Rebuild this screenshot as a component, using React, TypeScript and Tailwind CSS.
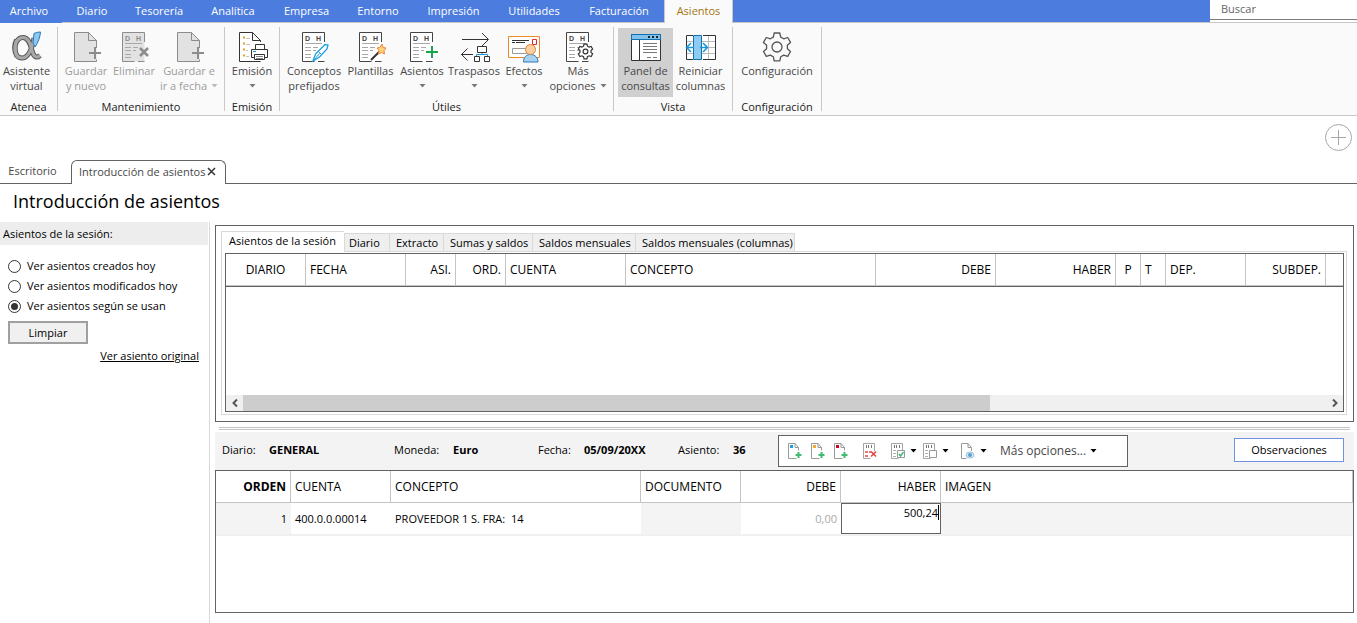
import type { ReactNode } from 'react';
import clsx from 'clsx';

const menuTabs = [
  { label: 'Archivo', width: 'w-[62px]' },
  { label: 'Diario', width: 'w-[60px]' },
  { label: 'Tesorería', width: 'w-[74px]' },
  { label: 'Analítica', width: 'w-[74px]' },
  { label: 'Empresa', width: 'w-[73px]' },
  { label: 'Entorno', width: 'w-[70px]' },
  { label: 'Impresión', width: 'w-[81px]' },
  { label: 'Utilidades', width: 'w-[80px]' },
  { label: 'Facturación', width: 'w-[90px]' },
];

const queryTabs = [
  { label: 'Diario', className: 'w-[46px] border-l pl-1' },
  { label: 'Extracto', className: 'w-[54px] pl-[6px]' },
  { label: 'Sumas y saldos', className: 'w-[89px] pl-[6px]' },
  { label: 'Saldos mensuales', className: 'w-[103px] pl-[6px]' },
  { label: 'Saldos mensuales (columnas)', className: 'w-[159px] pl-[6px]' },
];

const sessionColumns = [
  { label: 'DIARIO', className: 'w-[80px] text-center' },
  { label: 'FECHA', className: 'w-[100px] text-left' },
  { label: 'ASI.', className: 'w-[50px] text-right' },
  { label: 'ORD.', className: 'w-[50px] text-right' },
  { label: 'CUENTA', className: 'w-[120px] text-left' },
  { label: 'CONCEPTO', className: 'w-[250px] text-left' },
  { label: 'DEBE', className: 'w-[120px] text-right' },
  { label: 'HABER', className: 'w-[120px] text-right' },
  { label: 'P', className: 'w-[25px] text-center' },
  { label: 'T', className: 'w-[25px] text-left' },
  { label: 'DEP.', className: 'w-[80px] text-left' },
  { label: 'SUBDEP.', className: 'w-[80px] text-right' },
];

const entryColumns = [
  { label: 'ORDEN', className: 'w-[75px] text-right font-bold' },
  { label: 'CUENTA', className: 'w-[100px] text-left font-normal' },
  { label: 'CONCEPTO', className: 'w-[250px] text-left font-normal' },
  { label: 'DOCUMENTO', className: 'w-[100px] text-left font-normal' },
  { label: 'DEBE', className: 'w-[100px] text-right font-normal' },
  { label: 'HABER', className: 'w-[100px] text-right font-normal' },
  { label: 'IMAGEN', className: 'text-left font-normal' },
];

const entryInfo = [
  { label: 'Diario:', value: 'GENERAL', width: 'w-[172px]', labelWidth: 'w-[47px]' },
  { label: 'Moneda:', value: 'Euro', width: 'w-[144px]', labelWidth: 'w-[59px]' },
  { label: 'Fecha:', value: '05/09/20XX', width: 'w-[140px]', labelWidth: 'w-[46px]' },
  { label: 'Asiento:', value: '36', width: 'w-[100px]', labelWidth: 'w-[55px]' },
];

const sessionFilters = ['Ver asientos creados hoy', 'Ver asientos modificados hoy', 'Ver asientos según se usan'];

function Icon({ children }: { children: ReactNode }) {
  return (
    <svg width="32" height="32" viewBox="0 0 32 32" fill="none" aria-hidden="true">
      {children}
    </svg>
  );
}

function Caret({ className }: { className?: string }) {
  return (
    <svg width="7" height="4" viewBox="0 0 7 4" className={clsx('inline-block', className)} aria-hidden="true">
      <path d="M0.5 0h6L3.5 3.5z" fill="currentColor" />
    </svg>
  );
}

// Page with the D / H columns, shared by several ribbon icons
function Ledger({ children, disabled }: { children: ReactNode; disabled?: boolean }) {
  const ink = disabled ? '#8c8c8c' : '#444';
  return (
    <Icon>
      <path d="M26.5 16V1.5H4.5v29h22" fill={disabled ? '#e2e2e2' : '#fff'} />
      <path d="M26.5 11V1.5H4.5v29h12M20 30.500h6.500" stroke={ink} />
      <text x="7" y="10" fontSize="7" fontWeight="bold" fill={ink} fontFamily="Liberation Sans, sans-serif">D</text>
      <text x="18" y="10" fontSize="7" fontWeight="bold" fill={ink} fontFamily="Liberation Sans, sans-serif">H</text>
      <path d="M7 12.5h17M7 16.5h6M7 19.5h6M7 23.5h6M7 26.5h6M15 16.5h5M15 19.5h3" stroke="#a8a8a8" />
      {children}
    </Icon>
  );
}

const GEAR =
  'M13.2 2h5.6l.9 4.1 3 1.7 4-1.3 2.8 4.9-3.1 2.8v3.5l3.1 2.8-2.8 4.9-4-1.3-3 1.7-.9 4.1h-5.6l-.9-4.1-3-1.7-4 1.3-2.8-4.9 3.1-2.8v-3.5L2.5 11.4l2.8-4.9 4 1.3 3-1.700z';

// Assistant logo: a looped ribbon with a blue quill
function AssistantLogo() {
  const loop = 'M23 7c-1.500 8-5 20-12 20-5 0-7-4.500-7-10S7 6.500 12 6.500c6 0 7.500 8 9.500 14.500 1.500 5 4 6.500 7.500 3.500';
  return (
    <Icon>
      <path d={loop} stroke="#5a5a5a" strokeWidth="5" strokeLinejoin="round" />
      <path d="M5.500 9C3 13 3 21 6 25" stroke="#5a5a5a" strokeWidth="5" />
      <path d={loop} stroke="#a8a8a8" strokeWidth="3" strokeLinejoin="round" />
      <path d="M5.500 9.500C3.500 13 3.500 21 6 24.500" stroke="#a8a8a8" strokeWidth="3" />
      <path d="M23 2.500c2-1 4.500-1.500 6.500-1.500-.500 5-2 10-5.500 15l-2-4z" fill="#8cc8f0" stroke="#2b78b8" />
    </Icon>
  );
}

function SaveIcon() {
  return (
    <Icon>
      <path d="M4.500 1.500h14l8 8v21h-22z" fill="#e2e2e2" />
      <path d="M26.500 17V9.500l-8-8h-14v29h22v-2M18.500 1.500v8h8" stroke="#8c8c8c" />
      <path d="M25 16v12M19 22h12" stroke="#8c8c8c" strokeWidth="2" />
    </Icon>
  );
}

function PrintIcon() {
  return (
    <Icon>
      <path d="M16.500 1.500l8 8V30h-21V1.500z" fill="#fff" />
      <path d="M24.500 11V9.500l-8-8h-13v29h21M16.500 1.500v8h8" stroke="#333" />
      <path d="M7 6.500h2M7 12.500h2M7 18.500h2M7 24.500h2" stroke="#ee9d1c" strokeWidth="2" />
      <path d="M10 7.500h4M10 13.500h4M10 19.500h2M10 25.500h3" stroke="#c4c4c4" />
      <path d="M19.500 18.500v-5h9v5M18.500 26.500h-3v-8h16v8h-3" fill="#fff" stroke="#333" />
      <path d="M18.500 23.500h10v5h-10z" fill="#fff" stroke="#333" />
      <path d="M20 25.500h7M20 27.500h7" stroke="#888" />
      <path d="M17 20.500h3" stroke="#1b93d4" />
    </Icon>
  );
}

function TransferIcon() {
  return (
    <Icon>
      <path d="M4 8.500h26M24 2l6.500 6.500L24 15" stroke="#333" />
      <path d="M15 23.500H3M9.500 17.500l-6 6 6 6" stroke="#333" />
      <path d="M24 22v1.500M18.500 27v-3.500h11V27" stroke="#1b93d4" />
      <path d="M19.500 15.500h9v6h-9zM16.500 25.500h5v5h-5zM26.500 25.500h5v5h-5z" fill="#fff" stroke="#333" />
    </Icon>
  );
}

function BillsIcon() {
  return (
    <Icon>
      <path d="M.500 5.500h31v21H.500z" fill="#fff" stroke="#f08a24" />
      <path d="M4 9.500h17M8 11.500h9M4 11.500h3" stroke="#333" />
      <path d="M24.500 8.500h4v5h-4z" stroke="#e3262e" />
      <path d="M4.500 17.500h14v5h-14z" stroke="#999" />
      <path d="M15.500 31c0-4.500 2.500-7.500 7-7.500s7.500 3 7.500 7.500z" fill="#a9d2f0" stroke="#2b78b8" />
      <circle cx="22.500" cy="18.500" r="5" fill="#fbd0a0" stroke="#d98338" />
    </Icon>
  );
}

function PanelIcon() {
  return (
    <Icon>
      <path d="M1.500 3.500h29v26h-29z" fill="#fff" stroke="#333" />
      <path d="M1.500 3.500h29v5h-29z" fill="#7fc1ec" stroke="#1170b0" />
      <path d="M18 6h2M22 6h2M26 6h2" stroke="#222" strokeWidth="2" />
      <path d="M9.500 9v20" stroke="#333" />
      <path d="M13 12.500h14M13 15.500h14M13 18.500h14M13 21.500h14M17 26.500h4M23 26.500h4" stroke="#777" />
    </Icon>
  );
}

function ColumnsIcon() {
  return (
    <Icon>
      <path d="M1.500 4.500h29v24h-29z" fill="#fff" />
      <path d="M1 10.500h29M1 16.500h29M1 22.500h29M23.500 5v23" stroke="#bbb" />
      <path d="M8 4.500H1.500v24H8M18 4.500h12.500v24H18" stroke="#333" />
      <path d="M8.500 4.500h8v24h-8z" fill="#8ecbf2" stroke="#1170b0" />
      <path d="M9 16.500H2M6 12l-4.500 4.500L6 21M15 16.500h7M18 12l4.500 4.500L18 21" stroke="#1b93d4" strokeWidth="1.500" />
    </Icon>
  );
}

function RibbonButton({ icon, lines, width, caret, disabled, active }: {
  icon: ReactNode;
  lines: string[];
  width: string;
  caret?: boolean;
  disabled?: boolean;
  active?: boolean;
}) {
  return (
    <button
      type="button"
      disabled={disabled}
      aria-pressed={active}
      className={clsx(
        'flex h-[69px] flex-col items-center pt-[3px] whitespace-nowrap',
        width,
        disabled ? 'text-[#9c9c9c]' : 'text-[#484848]',
        active && 'bg-[#d0d0d0]',
      )}
    >
      {icon}
      <span className="leading-[15px]">{lines[0]}</span>
      <span className="flex min-h-[15px] items-center gap-1 leading-[15px]">
        {lines[1]}
        {caret && <Caret className={disabled ? 'text-[#bbb]' : 'text-[#777]'} />}
      </span>
    </button>
  );
}

function RibbonGroup({ label, width, children }: { label: string; width: string; children: ReactNode }) {
  return (
    <div className={clsx('flex shrink-0', width)}>
      <div className="flex flex-1 flex-col pt-[5px]">
        <div className="flex justify-center">{children}</div>
        <div className="text-center leading-5 text-[#222]">{label}</div>
      </div>
      <div className="my-1 w-px bg-[#c8c8c8]" />
    </div>
  );
}

function Ribbon() {
  return (
    <div className="flex h-[93px] overflow-hidden border-b border-[#c8c8c8] bg-[#fafafa]">
      <RibbonGroup label="Atenea" width="w-[58px]">
        <div className="pr-1">
          <RibbonButton icon={<AssistantLogo />} lines={['Asistente', 'virtual']} width="w-[52px]" />
        </div>
      </RibbonGroup>
      <RibbonGroup label="Mantenimiento" width="w-[167px]">
        <RibbonButton icon={<SaveIcon />} lines={['Guardar', 'y nuevo']} width="w-[50px]" disabled />
        <RibbonButton
          icon={<Ledger disabled><path d="M22 17l8 8M30 17l-8 8" stroke="#8c8c8c" strokeWidth="2.500" /></Ledger>}
          lines={['Eliminar']}
          width="w-[46px]"
          disabled
        />
        <RibbonButton icon={<SaveIcon />} lines={['Guardar e', 'ir a fecha']} width="w-[64px]" caret disabled />
      </RibbonGroup>
      <RibbonGroup label="Emisión" width="w-[55px]">
        <RibbonButton icon={<PrintIcon />} lines={['Emisión']} width="w-[50px]" caret />
      </RibbonGroup>
      <RibbonGroup label="Útiles" width="w-[334px]">
        <RibbonButton
          icon={
            <Ledger>
              <path d="M15 30l2.500-7L27 13.500l3 .500-1 4-7.500 8z" fill="#fff" stroke="#1b9fe0" strokeWidth="1.300" />
              <path d="M15.500 29.500l6-7M20 20l4 4" stroke="#1b9fe0" />
            </Ledger>
          }
          lines={['Conceptos', 'prefijados']}
          width="w-[60px]"
        />
        <RibbonButton
          icon={
            <Ledger>
              <path d="M16 29l9-9" stroke="#333" strokeWidth="2" />
              <path d="M27 13l1 3.500 3 .500-2 2.500.500 3.500-3-1.500-3 1.500.500-3.500-2-2.500 3-.500z" fill="#ffd27a" stroke="#f0843c" />
            </Ledger>
          }
          lines={['Plantillas']}
          width="w-[53px]"
        />
        <RibbonButton
          icon={<Ledger><path d="M26 15v12M20 21h12" stroke="#16a94c" strokeWidth="2" /></Ledger>}
          lines={['Asientos']}
          width="w-[50px]"
          caret
        />
        <RibbonButton icon={<TransferIcon />} lines={['Traspasos']} width="w-[54px]" caret />
        <RibbonButton icon={<BillsIcon />} lines={['Efectos']} width="w-[46px]" caret />
        <RibbonButton
          icon={
            <Ledger>
              <g transform="translate(15 12) scale(.53)">
                <path d={GEAR} fill="#fff" stroke="#333" strokeWidth="2.200" />
                <circle cx="16" cy="16" r="4.500" stroke="#333" strokeWidth="2.200" />
              </g>
            </Ledger>
          }
          lines={['Más', 'opciones']}
          width="w-[62px]"
          caret
        />
      </RibbonGroup>
      <RibbonGroup label="Vista" width="w-[119px]">
        <RibbonButton icon={<PanelIcon />} lines={['Panel de', 'consultas']} width="w-[55px]" active />
        <RibbonButton icon={<ColumnsIcon />} lines={['Reiniciar', 'columnas']} width="w-[55px]" />
      </RibbonGroup>
      <RibbonGroup label="Configuración" width="w-[89px]">
        <RibbonButton
          icon={
            <Icon>
              <path d={GEAR} stroke="#555" strokeWidth="1.300" strokeLinejoin="round" />
              <circle cx="16" cy="16" r="5" stroke="#555" strokeWidth="1.300" />
            </Icon>
          }
          lines={['Configuración']}
          width="w-[80px]"
        />
      </RibbonGroup>
    </div>
  );
}

function MenuBar() {
  return (
    <nav className="flex h-[23px] bg-[#4c7cdd] text-white">
      {menuTabs.map((tab) => (
        <button
          key={tab.label}
          type="button"
          className={clsx('shrink-0 border-b pb-px text-center', tab.width, tab.label === 'Archivo' ? 'border-[#4c7cdd] pr-1' : 'border-[#c8c8c8]')}
        >
          {tab.label}
        </button>
      ))}
      <button type="button" className="w-[69px] shrink-0 border-x border-[#c8c8c8] bg-[#fafafa] pb-[2px] text-[#a37512]">Asientos</button>
      <div className="flex-1 border-b border-[#c8c8c8]" />
      <div className="w-[147px] border-b border-[#c8c8c8] bg-white">
        <input
          type="search"
          aria-label="Buscar"
          placeholder="Buscar"
          className="block h-[20px] w-full border-b border-[#7c7c7c] px-[11px] pb-[3px] text-[#666] outline-none placeholder:text-[#666]"
        />
      </div>
    </nav>
  );
}

function WindowTabs() {
  return (
    <>
      <div className="flex h-[44px] justify-end pt-2 pr-[5px]">
        <button type="button" aria-label="Añadir pestaña" className="h-[27px] w-[27px]">
          <svg width="27" height="27" viewBox="0 0 27 27" fill="none" stroke="#a6a6a6">
            <circle cx="13.500" cy="13.500" r="13" />
            <path d="M13.500 6v15M6 13.500h15" />
          </svg>
        </button>
      </div>
      <div className="flex h-[24px] text-[#484848]">
        <button type="button" className="w-[71px] border-b border-[#626262] pr-[6px] pb-px">Escritorio</button>
        <div className="flex w-[155px] items-center justify-between rounded-t-md border-x border-t border-[#626262] pr-[9px] pb-[2px] pl-[7px] whitespace-nowrap">
          <span>Introducción de asientos</span>
          <button type="button" aria-label="Cerrar">
            <svg width="9" height="9" viewBox="0 0 9 9" fill="none" stroke="#333" strokeWidth="1.500">
              <path d="M1 1l7 7M8 1L1 8" />
            </svg>
          </button>
        </div>
        <div className="flex-1 border-b border-[#626262]" />
      </div>
    </>
  );
}

function SessionFilter() {
  return (
    <aside className="w-[210px] shrink-0 border-r border-[#d8d8d8]">
      <h2 className="mr-px h-[23px] bg-[#ededed] pl-[3px] leading-[23px]">Asientos de la sesión:</h2>
      <form className="flex flex-col pt-[11px] pr-[10px] pl-2">
        {sessionFilters.map((label, index) => (
          <label key={label} className="flex h-5 items-center gap-[6px]">
            <input
              type="radio"
              name="filtro"
              defaultChecked={index === 2}
              className="h-[13px] w-[13px] appearance-none rounded-full border border-[#333] bg-white bg-clip-content p-[2px] checked:bg-[#333]"
            />
            {label}
          </label>
        ))}
        <button type="button" className="mt-[5px] h-[23px] w-[80px] border-2 border-[#a0a0a0] bg-[#f0f0f0]">Limpiar</button>
        <a href="#" className="mt-1 self-end leading-4 underline">Ver asiento original</a>
      </form>
    </aside>
  );
}

function Chevron({ d }: { d: string }) {
  return (
    <svg width="6" height="8" viewBox="0 0 6 8" fill="none" stroke="#555" strokeWidth="2" aria-hidden="true">
      <path d={d} />
    </svg>
  );
}

function QueryPanel() {
  return (
    <section className="border border-[#626262] pt-[5px] pr-[6px] pb-[6px] pl-[5px]">
      <div className="flex h-[21px] items-end whitespace-nowrap">
        <button type="button" className="h-[21px] w-[123px] border-t border-l border-[#d9d9d9] pr-1 pb-[2px] pl-[3px]">Asientos de la sesión</button>
        {queryTabs.map((tab) => (
          <button
            key={tab.label}
            type="button"
            className={clsx('h-[19px] border-y border-r border-[#d9d9d9] bg-[#efefef] text-left', tab.className)}
          >
            {tab.label}
          </button>
        ))}
        <div className="flex-1 border-b border-[#d9d9d9]" />
      </div>
      <div className="border-x border-b border-[#d9d9d9] pt-px pr-[2px] pb-[2px] pl-[3px]">
        <div className="border border-[#626262]">
          <table className="w-full table-fixed border-separate border-spacing-0 border-b border-[#626262] text-[12px]">
            <thead>
              <tr>
                {sessionColumns.map((column) => (
                  <th
                    key={column.label}
                    className={clsx('h-[32px] border-r border-b border-[#c4c4c4] px-1 font-normal', column.className)}
                  >
                    {column.label}
                  </th>
                ))}
                <th className="border-b border-[#c4c4c4] p-0" aria-label="Más columnas" />
              </tr>
            </thead>
          </table>
          <div className="h-[108px]" />
          <div className="flex h-4 bg-[#f0f0f0]">
            <button type="button" aria-label="Desplazar a la izquierda" className="flex w-[17px] items-center justify-center"><Chevron d="M5 0.500L1.500 4 5 7.500" /></button>
            <div className="flex-1">
              <div className="h-4 w-[69%] bg-[#cdcdcd]" />
            </div>
            <button type="button" aria-label="Desplazar a la derecha" className="flex w-[17px] items-center justify-center"><Chevron d="M1 0.500L4.500 4 1 7.500" /></button>
          </div>
        </div>
      </div>
    </section>
  );
}

function NewEntryIcon({ color }: { color: string }) {
  return (
    <svg width="14" height="17" viewBox="0 0 14 17" fill="none" aria-hidden="true">
      <path d="M10.500 7.500v-3l-3.500-4H.500v15h8M7 .500v4h3.500" stroke="#9a9a9a" />
      <path d="M2 2h3v3H2z" fill={color} />
      <path d="M10.500 9v6M7.500 12h6" stroke="#3fbb72" strokeWidth="2" />
    </svg>
  );
}

function SheetIcon({ children }: { children: ReactNode }) {
  return (
    <svg width="14" height="17" viewBox="0 0 14 17" fill="none" aria-hidden="true">
      <path d="M11.500 8V.500H.500v15h7" stroke="#a6a6a6" />
      <path d="M3 3.500h1M5 3.500h1M8 3.500h1" stroke="#777" strokeWidth="3" />
      {children}
    </svg>
  );
}

function EntryToolbar() {
  return (
    <div role="toolbar" className="flex h-8 w-[350px] shrink-0 items-center border border-[#626262] bg-white pl-[9px]">
      <button type="button" aria-label="Nuevo asiento" className="w-[23px]"><NewEntryIcon color="#1b9fe0" /></button>
      <button type="button" aria-label="Nuevo desde plantilla" className="w-[23px]"><NewEntryIcon color="#f5ab2a" /></button>
      <button type="button" aria-label="Nuevo contraasiento" className="w-[29px]"><NewEntryIcon color="#d8001e" /></button>
      <button type="button" aria-label="Eliminar asiento" className="w-[28px]">
        <SheetIcon>
          <path d="M2 9h3M6 9h2M2 13h3" stroke="#ef7474" strokeWidth="2" />
          <path d="M8 8.500l5 5M13 8.500l-5 5" stroke="#e84040" strokeWidth="1.500" />
        </SheetIcon>
      </button>
      <button type="button" aria-label="Validar" className="flex w-[32px] items-center gap-[5px]">
        <SheetIcon>
          <path d="M2 7.500h3M2 10.500h3M2 13.500h3" stroke="#b0b0b0" />
          <path d="M6.500 7.500h7v7h-7z" fill="#fff" stroke="#999" />
          <path d="M8 11l1.500 2 3-4" stroke="#3fbb72" strokeWidth="1.500" />
        </SheetIcon>
        <Caret />
      </button>
      <button type="button" aria-label="Copiar" className="flex w-[38px] items-center gap-[5px]">
        <SheetIcon>
          <path d="M2 7.500h3M2 10.500h3M2 13.500h3" stroke="#b0b0b0" />
          <path d="M6.500 7.500h7v7h-7z" fill="#fff" stroke="#999" />
        </SheetIcon>
        <Caret />
      </button>
      <button type="button" aria-label="Ver documento" className="flex w-[39px] items-center gap-[5px]">
        <svg width="14" height="17" viewBox="0 0 14 17" fill="none" aria-hidden="true">
          <path d="M10.500 8V4.500L7 .500H.500v15h5M7 .500v4h3.500" stroke="#9a9a9a" />
          <ellipse cx="9" cy="12" rx="4" ry="3" fill="#d5e8f5" stroke="#9ec2dd" />
          <circle cx="9" cy="12" r="2" fill="#5c9fd0" />
        </svg>
        <Caret />
      </button>
      <button type="button" className="flex items-center gap-1 text-[12px] whitespace-nowrap text-[#484848]">
        Más opciones...
        <Caret className="text-black" />
      </button>
    </div>
  );
}

function EntryBar() {
  return (
    <div className="flex h-[38px] items-center bg-[#f3f3f3] pr-[10px] pl-[7px]">
      <dl className="flex pb-[2px]">
        {entryInfo.map((item) => (
          <div key={item.label} className={clsx('flex', item.width)}>
            <dt className={item.labelWidth}>{item.label}</dt>
            <dd className="font-bold">{item.value}</dd>
          </div>
        ))}
      </dl>
      <EntryToolbar />
      <button type="button" className="mb-[2px] ml-auto h-[24px] w-[110px] border border-[#6f93e2] bg-white">Observaciones</button>
    </div>
  );
}

function EntryGrid() {
  return (
    <div className="flex-1 border border-[#626262]">
      <table className="w-full table-fixed border-separate border-spacing-0 text-[12px]">
        <thead>
          <tr>
            {entryColumns.map((column) => (
              <th key={column.label} className={clsx('h-[32px] border-r border-b border-[#c4c4c4] px-1', column.className)}>
                {column.label}
              </th>
            ))}
          </tr>
        </thead>
        <tbody className="text-[11px] [&_td]:h-[33px] [&_td]:border-b-2 [&_td]:border-[#f0f0f0] [&_td]:px-1">
          <tr>
            <td className="bg-[#f4f4f4] text-right">1</td>
            <td>400.0.0.00014</td>
            <td className="whitespace-pre">PROVEEDOR 1 S. FRA:  14</td>
            <td className="bg-[#f4f4f4]" />
            <td className="text-right text-[#aaa]">0,00</td>
            <td className="!p-0">
              <div className="flex h-[31px] items-start border border-[#626262] pt-px pr-px">
                <input aria-label="Haber" defaultValue="500,24" className="h-[15px] w-full min-w-0 text-right outline-none" />
                <span className="h-[15px] w-px shrink-0 bg-black" />
              </div>
            </td>
            <td className="bg-[#f4f4f4]" />
          </tr>
        </tbody>
      </table>
    </div>
  );
}

export default function App() {
  return (
    <div className="flex min-h-screen flex-col bg-white font-['Open_Sans','Noto_Sans',sans-serif] text-[11px] leading-4 text-black">
      <MenuBar />
      <Ribbon />
      <WindowTabs />
      <h1 className="h-[38px] pl-[13px] text-[18px] leading-[34px]">Introducción de asientos</h1>
      <div className="flex flex-1">
        <SessionFilter />
        <main className="flex min-w-0 flex-1 flex-col pt-[3px] pr-[3px] pb-[10px] pl-[5px]">
          <QueryPanel />
          <div className="mx-1 mt-[5px] mb-[2px] h-[3px] border-y border-[#c4c4c4]" />
          <EntryBar />
          <EntryGrid />
        </main>
      </div>
    </div>
  );
}
